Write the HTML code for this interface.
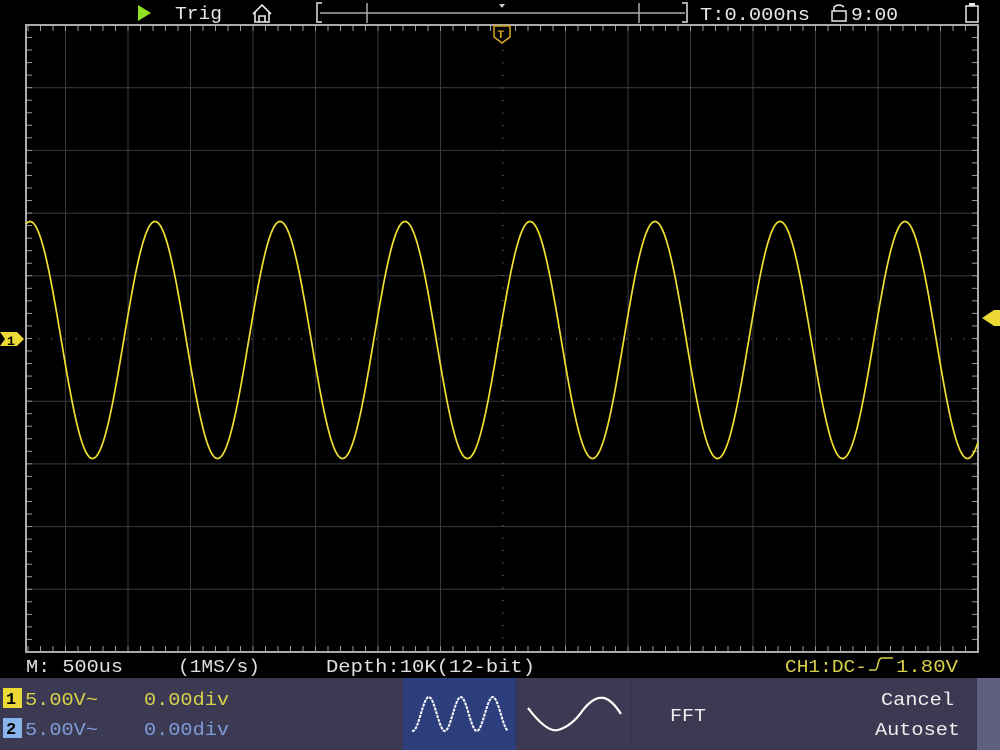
<!DOCTYPE html>
<html><head><meta charset="utf-8"><style>
html,body{margin:0;padding:0;background:#000;width:1000px;height:750px;overflow:hidden}
svg{display:block}
text{font-family:"Liberation Mono",monospace}
</style></head><body>
<svg id="s" width="1000" height="750" viewBox="0 0 1000 750" xmlns="http://www.w3.org/2000/svg">
<rect width="1000" height="750" fill="#000"/>
<g id="grid"></g>
<polygon points="138,5 138,21 151,13" fill="#8fe022"/>
<text x="175" y="19" fill="#e8e8e8" font-size="18" textLength="47" lengthAdjust="spacingAndGlyphs">Trig</text>
<path d="M253,14 L262,5 L271,14 M255,12 V22 H269 V12 M259,22 V16 H265 V22" stroke="#e8e8e8" stroke-width="1.6" fill="none"/>
<path d="M322,3 H317 V22 H322" stroke="#aaa" stroke-width="2" fill="none"/>
<path d="M682,3 H687 V22 H682" stroke="#aaa" stroke-width="2" fill="none"/>
<line x1="320" y1="13" x2="685" y2="13" stroke="#aaa" stroke-width="1.5"/>
<line x1="367" y1="3" x2="367" y2="23" stroke="#aaa" stroke-width="1.5"/>
<line x1="639" y1="3" x2="639" y2="23" stroke="#aaa" stroke-width="1.5"/>
<polygon points="499,4 505,4 502,8" fill="#ccc"/>
<text x="700" y="20" fill="#e8e8e8" font-size="18" textLength="110" lengthAdjust="spacingAndGlyphs">T:0.000ns</text>
<path d="M832,21 V11 H846 V21 Z M834,11 V7 Q839,3 844,7" stroke="#e8e8e8" stroke-width="1.5" fill="none"/>
<text x="851" y="20" fill="#e8e8e8" font-size="18" textLength="47" lengthAdjust="spacingAndGlyphs">9:00</text>
<rect x="966" y="6" width="12" height="16" fill="none" stroke="#e8e8e8" stroke-width="1.5"/>
<rect x="969" y="3" width="6" height="3" fill="#e8e8e8"/>
<path d="M494,26 H510 V37 L502,43 L494,37 Z" fill="#000" stroke="#d9a520" stroke-width="1.5"/>
<text x="497.5" y="38" fill="#d9a520" font-size="11" font-weight="bold">T</text>
<path id="wave" fill="none" stroke="#f0e030" stroke-width="1.7"/>
<path d="M0,332 H17 L24,339 L17,346 H0 L5,339 Z" fill="#ecd935"/>
<text x="7" y="345" fill="#000" font-size="13" font-weight="bold">1</text>
<path d="M1000,310 V326 H994 L982,318 L994,310 Z" fill="#ecd935"/>
<text x="26" y="672" fill="#e0e0e0" font-size="18" textLength="97" lengthAdjust="spacingAndGlyphs">M: 500us</text>
<text x="178" y="672" fill="#e0e0e0" font-size="18" textLength="82" lengthAdjust="spacingAndGlyphs">(1MS/s)</text>
<text x="326" y="672" fill="#e0e0e0" font-size="18" textLength="209" lengthAdjust="spacingAndGlyphs">Depth:10K(12-bit)</text>
<text x="785" y="672" fill="#d8cf4a" font-size="18" textLength="82" lengthAdjust="spacingAndGlyphs">CH1:DC-</text>
<path d="M869,670 H875 Q877,670 878,664 Q879,658 882,658 H893" stroke="#d8cf4a" stroke-width="1.6" fill="none"/>
<text x="896" y="672" fill="#d8cf4a" font-size="18" textLength="62" lengthAdjust="spacingAndGlyphs">1.80V</text>
<rect x="0" y="678" width="1000" height="72" fill="#35344b"/>
<rect x="0" y="678" width="402" height="72" fill="#3b3a52"/>
<rect x="403" y="678" width="113" height="72" fill="#2c3f7c"/>
<rect x="517" y="678" width="114" height="72" fill="#3b3a52"/>
<rect x="632" y="678" width="114" height="72" fill="#3b3a52"/>
<rect x="747" y="678" width="114" height="72" fill="#3b3a52"/>
<rect x="862" y="678" width="114" height="72" fill="#3b3a52"/>
<rect x="977" y="678" width="23" height="72" fill="#5f5f82"/>
<rect x="3" y="688" width="19" height="20" fill="#ecd935"/>
<text x="6" y="704" fill="#000" font-size="17" font-weight="bold">1</text>
<text x="25" y="705" fill="#d8cf4a" font-size="18" textLength="73" lengthAdjust="spacingAndGlyphs">5.00V~</text>
<text x="144" y="705" fill="#d8cf4a" font-size="18" textLength="85" lengthAdjust="spacingAndGlyphs">0.00div</text>
<rect x="3" y="718" width="19" height="20" fill="#8ab4ee"/>
<text x="6" y="734" fill="#000" font-size="17" font-weight="bold">2</text>
<text x="25" y="735" fill="#7f9cd8" font-size="18" textLength="73" lengthAdjust="spacingAndGlyphs">5.00V~</text>
<text x="144" y="735" fill="#7f9cd8" font-size="18" textLength="85" lengthAdjust="spacingAndGlyphs">0.00div</text>
<path id="w1" fill="none" stroke="#fff" stroke-width="2" stroke-dasharray="3 1"/>
<path d="M528,708 Q547,733 558,730 Q572,726 583,710 Q594,696 604,698 Q612,700 621,714" fill="none" stroke="#fff" stroke-width="2.2"/>
<text x="670" y="721" fill="#eee" font-size="18" textLength="36" lengthAdjust="spacingAndGlyphs">FFT</text>
<text x="881" y="705" fill="#eee" font-size="18" textLength="73" lengthAdjust="spacingAndGlyphs">Cancel</text>
<text x="875" y="735" fill="#eee" font-size="18" textLength="85" lengthAdjust="spacingAndGlyphs">Autoset</text>
</svg>
<script>
var g=document.getElementById('grid'),h='';
var L=26,R=978,T=25,B=652,cx=503,cy=339;
function ln(x1,y1,x2,y2,c,w,d){h+='<line x1="'+x1+'" y1="'+y1+'" x2="'+x2+'" y2="'+y2+'" stroke="'+c+'" stroke-width="'+w+'"'+(d?' stroke-dasharray="'+d+'"':'')+'/>';}
for(var x=65.5;x<R;x+=62.5){ if(Math.abs(x-cx)<5)continue; ln(x,T,x,B,'#3a3a3a',1);}
for(var i=1;i<10;i++){var y=T+i*62.7; if(i==5)continue; ln(L,y,R,y,'#3a3a3a',1);}
ln(cx,T,cx,B,'#888',1,'1 11.5');ln(L,cy,R,cy,'#888',1,'1 11.5');
for(var x=28;x<R;x+=12.5){ln(x,T,x,T+6,'#999',1);ln(x,B,x,B-6,'#999',1);}
for(var y=T+12.5;y<B;y+=12.54){ln(L,y,L+6,y,'#999',1);ln(R,y,R-6,y,'#999',1);}
h+='<rect x="'+L+'" y="'+T+'" width="'+(R-L)+'" height="'+(B-T)+'" fill="none" stroke="#aaa" stroke-width="2"/>';
g.innerHTML=h;
var d='';for(var x=L;x<=R;x+=1){var y=340-118.5*Math.cos(2*Math.PI*(x-30)/125);d+=(x==L?'M':'L')+x+','+y.toFixed(1);}
document.getElementById('wave').setAttribute('d',d);
var d2='';for(var x=412;x<=508;x+=1){var y=714-17*Math.cos(2*Math.PI*(x-412)/32+Math.PI*0.95);d2+=(x==412?'M':'L')+x+','+y.toFixed(1);}
document.getElementById('w1').setAttribute('d',d2);
</script>
</body></html>
